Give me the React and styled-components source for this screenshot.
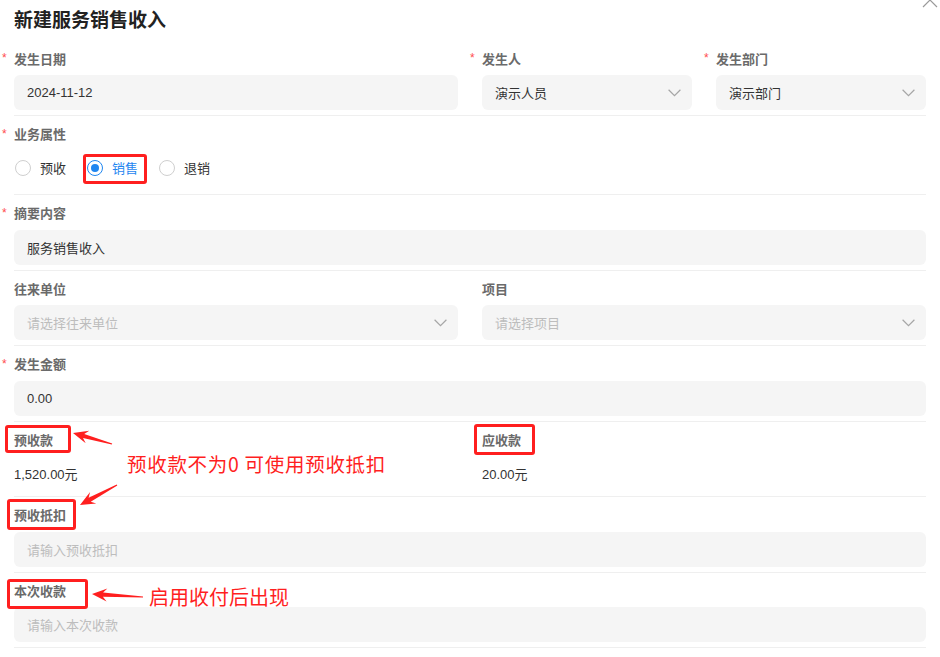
import React from 'react';
import styled, { createGlobalStyle } from 'styled-components';

const GlobalStyle = createGlobalStyle`
  html, body {
    margin: 0;
    padding: 0;
    background: #fff;
  }
  * {
    box-sizing: border-box;
  }
`;

const FONT = `"Liberation Sans", "Noto Sans CJK SC", sans-serif`;
const RED = '#ff1f1f';

const Page = styled.div`
  position: relative;
  width: 940px;
  height: 657px;
  padding: 0 14px;
  overflow: hidden;
  font-family: ${FONT};
  color: #333;
`;

const Title = styled.h1`
  margin: 8px 0 6.5px;
  font-size: 19px;
  line-height: 26px;
  font-weight: 700;
  color: #222;
`;

const CloseButton = styled.button`
  position: absolute;
  top: -8px;
  right: 2px;
  width: 16px;
  height: 16px;
  padding: 0;
  border: 0;
  background: none;
  display: flex;
`;

const Row = styled.div`
  display: grid;
  grid-template-columns: repeat(4, 1fr);
  column-gap: 24px;
  padding: 7.5px 0 5px;
  border-bottom: 1px solid #efefef;
`;

const Field = styled.div`
  grid-column: span ${({ $span }) => $span || 4};
  display: flex;
  flex-direction: column;
  min-width: 0;
`;

const Label = styled.div`
  display: flex;
  align-items: center;
  height: 20px;
  margin-bottom: 7px;
  font-size: 13px;
  font-weight: 700;
  color: #6a6a6a;
`;

const Star = styled.span`
  width: 12px;
  margin-left: -12px;
  color: #ff4d4f;
  font-size: 12px;
  font-weight: 400;
`;

const Input = styled.div`
  display: flex;
  align-items: center;
  justify-content: space-between;
  height: 35px;
  padding: 0 11px 0 13px;
  border-radius: 6px;
  background: #f5f5f5;
  font-size: 13px;
  color: ${({ $placeholder }) => ($placeholder ? '#bdbdbd' : '#333')};
`;

const Value = styled.div`
  display: flex;
  align-items: center;
  height: 35px;
  font-size: 13px;
  color: #333;
`;

const RadioGroup = styled.div`
  display: flex;
  align-items: center;
  gap: 20px;
  height: 34px;
  margin-bottom: 4.5px;
`;

const RadioItem = styled.label`
  display: flex;
  align-items: center;
  gap: 9px;
  font-size: 13px;
  color: ${({ $checked }) => ($checked ? '#1f86f0' : '#333')};
`;

const RadioCircle = styled.span`
  display: flex;
  align-items: center;
  justify-content: center;
  width: 16px;
  height: 16px;
  margin-left: 1px;
  border-radius: 50%;
  border: 1px solid ${({ $checked }) => ($checked ? '#1f86f0' : '#cfcfcf')};
  background: #fff;

  &::after {
    content: '';
    display: ${({ $checked }) => ($checked ? 'block' : 'none')};
    width: 8px;
    height: 8px;
    border-radius: 50%;
    background: #1f86f0;
  }
`;

const Overlay = styled.div`
  position: absolute;
  inset: 0;
  pointer-events: none;
`;

const MarkBox = styled.div`
  position: absolute;
  border: 3px solid ${RED};
  border-radius: 3px;
`;

const Note = styled.div`
  position: absolute;
  font-family: "Noto Sans CJK SC", "Liberation Sans", sans-serif;
  font-weight: 400;
  font-size: ${({ $size }) => $size}px;
  letter-spacing: ${({ $spacing }) => $spacing || 0}px;
  line-height: 1.3;
  color: ${RED};
  white-space: nowrap;
`;

const ArrowLayer = styled.svg`
  position: absolute;
  left: 0;
  top: 0;
`;

const Chevron = () => (
  <svg width="13" height="8" viewBox="0 0 13 8">
    <polyline points="0.6,0.8 6.5,6.6 12.4,0.8" fill="none" stroke="#a6a6a6" strokeWidth="1.2" />
  </svg>
);

function arrowPoints([tx, ty], [px, py]) {
  const len = Math.hypot(px - tx, py - ty);
  const dx = (px - tx) / len;
  const dy = (py - ty) / len;
  const nx = -dy;
  const ny = dx;
  const head = 15;
  const hx = px - dx * head;
  const hy = py - dy * head;
  const bx = px - dx * (head - 4);
  const by = py - dy * (head - 4);
  const p = (x, y) => `${x.toFixed(1)},${y.toFixed(1)}`;
  return [
    p(tx + nx * 0.6, ty + ny * 0.6),
    p(bx + nx * 2.2, by + ny * 2.2),
    p(hx + nx * 6.5, hy + ny * 6.5),
    p(px, py),
    p(hx - nx * 6.5, hy - ny * 6.5),
    p(bx - nx * 2.2, by - ny * 2.2),
    p(tx - nx * 0.6, ty - ny * 0.6),
  ].join(' ');
}

const arrows = [
  [[112, 444], [73, 433]],
  [[117, 485], [80, 505]],
  [[143, 597], [92, 594]],
];

const marks = [
  { left: 83, top: 154, width: 64, height: 30 },
  { left: 5, top: 425, width: 66, height: 28 },
  { left: 474, top: 424, width: 61, height: 31 },
  { left: 7, top: 499, width: 69, height: 31 },
  { left: 7, top: 579, width: 81, height: 30 },
];

const radios = [
  { label: '预收', checked: false },
  { label: '销售', checked: true },
  { label: '退销', checked: false },
];

function FieldLabel({ required, children }) {
  return (
    <Label>
      {required && <Star>*</Star>}
      {children}
    </Label>
  );
}

export default function App() {
  return (
    <>
      <GlobalStyle />
      <Page>
        <Title>新建服务销售收入</Title>
        <CloseButton aria-label="关闭">
          <svg width="16" height="16" viewBox="0 0 16 16">
            <path d="M1 1 L15 15 M15 1 L1 15" stroke="#9a9a9a" strokeWidth="1.2" />
          </svg>
        </CloseButton>

        <Row>
          <Field $span={2}>
            <FieldLabel required>发生日期</FieldLabel>
            <Input>2024-11-12</Input>
          </Field>
          <Field $span={1}>
            <FieldLabel required>发生人</FieldLabel>
            <Input>
              演示人员
              <Chevron />
            </Input>
          </Field>
          <Field $span={1}>
            <FieldLabel required>发生部门</FieldLabel>
            <Input>
              演示部门
              <Chevron />
            </Input>
          </Field>
        </Row>

        <Row>
          <Field>
            <FieldLabel required>业务属性</FieldLabel>
            <RadioGroup>
              {radios.map((r) => (
                <RadioItem key={r.label} $checked={r.checked}>
                  <RadioCircle $checked={r.checked} />
                  {r.label}
                </RadioItem>
              ))}
            </RadioGroup>
          </Field>
        </Row>

        <Row>
          <Field>
            <FieldLabel required>摘要内容</FieldLabel>
            <Input>服务销售收入</Input>
          </Field>
        </Row>

        <Row>
          <Field $span={2}>
            <FieldLabel>往来单位</FieldLabel>
            <Input $placeholder>
              请选择往来单位
              <Chevron />
            </Input>
          </Field>
          <Field $span={2}>
            <FieldLabel>项目</FieldLabel>
            <Input $placeholder>
              请选择项目
              <Chevron />
            </Input>
          </Field>
        </Row>

        <Row>
          <Field>
            <FieldLabel required>发生金额</FieldLabel>
            <Input>0.00</Input>
          </Field>
        </Row>

        <Row>
          <Field $span={2}>
            <FieldLabel>预收款</FieldLabel>
            <Value>1,520.00元</Value>
          </Field>
          <Field $span={2}>
            <FieldLabel>应收款</FieldLabel>
            <Value>20.00元</Value>
          </Field>
        </Row>

        <Row>
          <Field>
            <FieldLabel>预收抵扣</FieldLabel>
            <Input $placeholder>请输入预收抵扣</Input>
          </Field>
        </Row>

        <Row>
          <Field>
            <FieldLabel>本次收款</FieldLabel>
            <Input $placeholder>请输入本次收款</Input>
          </Field>
        </Row>

        <Overlay>
          {marks.map((m, i) => (
            <MarkBox key={i} style={m} />
          ))}
          <Note $size={19.5} $spacing={0.7} style={{ left: 127, top: 451 }}>
            预收款不为0 可使用预收抵扣
          </Note>
          <Note $size={20} style={{ left: 149, top: 584 }}>
            启用收付后出现
          </Note>
          <ArrowLayer width="940" height="657" viewBox="0 0 940 657">
            {arrows.map(([t, p], i) => (
              <polygon key={i} points={arrowPoints(t, p)} fill={RED} />
            ))}
          </ArrowLayer>
        </Overlay>
      </Page>
    </>
  );
}
